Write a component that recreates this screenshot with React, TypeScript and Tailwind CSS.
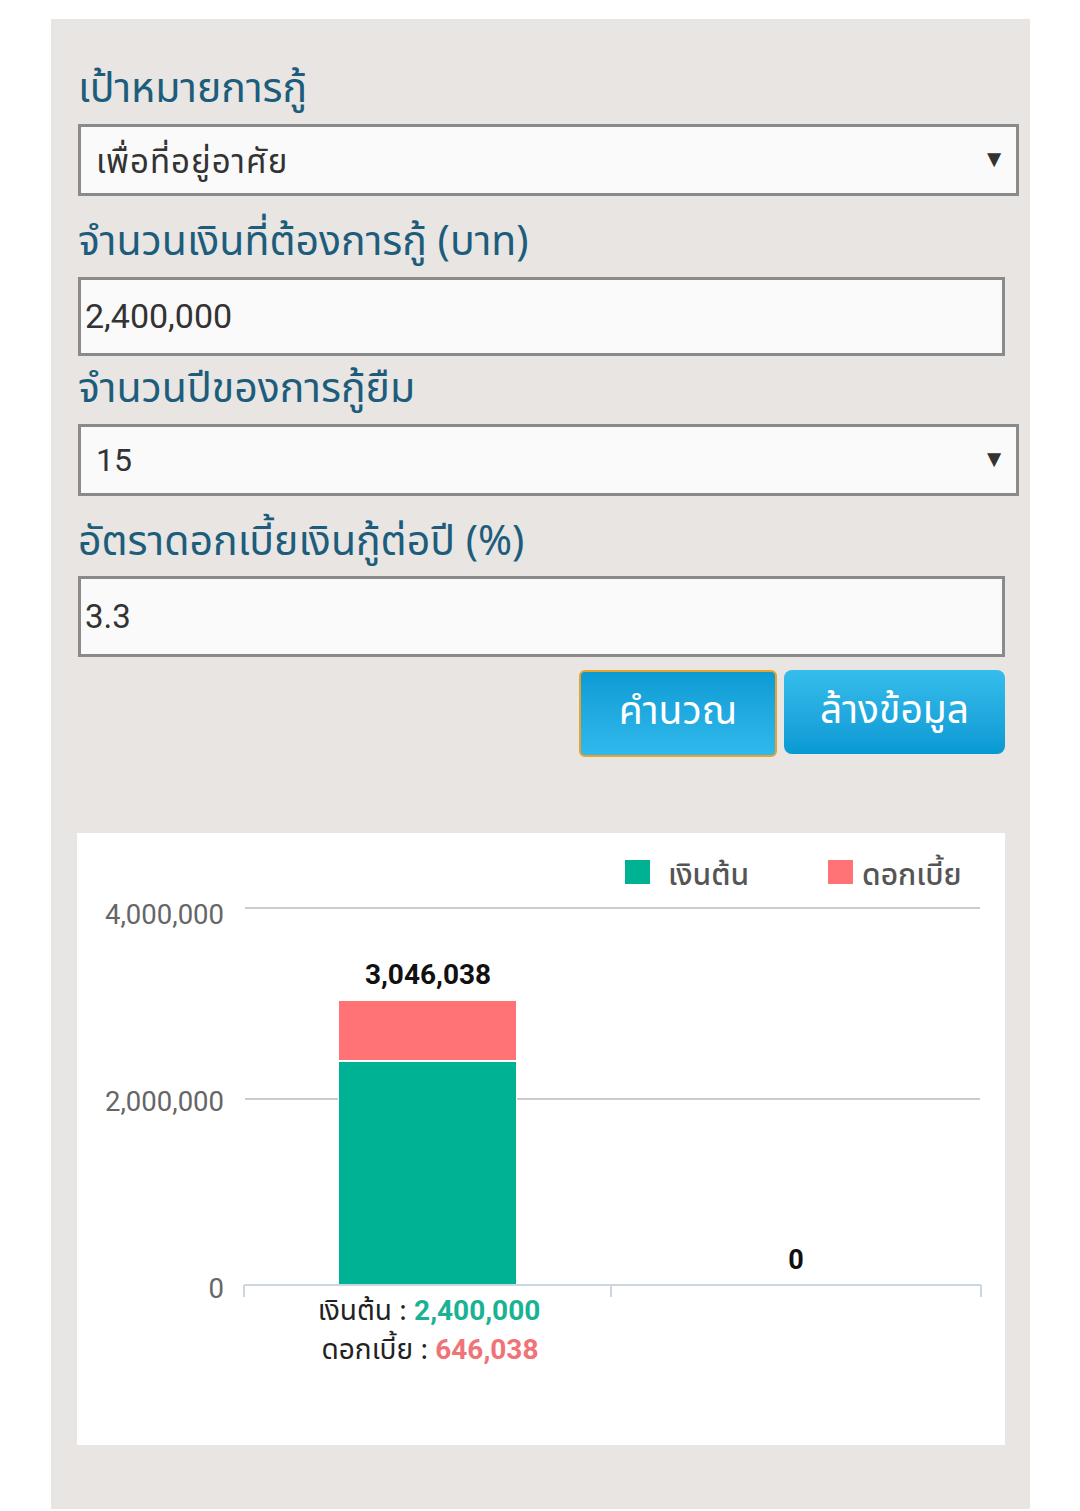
import React from 'react';

const thai = '"Noto Sans Thai", "Noto Sans", Roboto, sans-serif';

const Label: React.FC<{ children: React.ReactNode; className?: string }> = ({ children, className }) => (
  <div className={`h-[56px] flex items-center text-[41px] text-[#1d5d7b] ${className ?? ''}`}>{children}</div>
);

const Chart: React.FC = () => (
  <svg width="928" height="612" viewBox="0 0 928 612" className="block" style={{ fontFamily: thai }}>
    <rect x="0" y="0" width="928" height="612" fill="#ffffff" />
    {/* legend */}
    <rect x="548" y="27" width="25" height="24" fill="#00b294" />
    <text x="591" y="52" fontSize="30" fill="#555" fontWeight="500">เงินต้น</text>
    <rect x="751" y="27" width="25" height="24" fill="#ff7276" />
    <text x="785" y="52" fontSize="30" fill="#555" fontWeight="500">ดอกเบี้ย</text>
    {/* grid */}
    <line x1="168" y1="75" x2="903" y2="75" stroke="#cccccc" strokeWidth="2" />
    <line x1="168" y1="266" x2="903" y2="266" stroke="#cccccc" strokeWidth="2" />
    <text x="147" y="91" fontSize="27.5" fill="#666" textAnchor="end" fontFamily="Roboto, sans-serif">4,000,000</text>
    <text x="147" y="278" fontSize="27.5" fill="#666" textAnchor="end" fontFamily="Roboto, sans-serif">2,000,000</text>
    <text x="147" y="465" fontSize="27.5" fill="#666" textAnchor="end" fontFamily="Roboto, sans-serif">0</text>
    {/* bar */}
    <rect x="261" y="167" width="179" height="286" fill="#ffffff" />
    <rect x="262" y="168" width="177" height="59" fill="#ff7276" />
    <rect x="262" y="229" width="177" height="223" fill="#00b294" />
    <text x="351" y="151" fontSize="28" fontWeight="700" fill="#111" textAnchor="middle" fontFamily="Roboto, sans-serif">3,046,038</text>
    <text x="719" y="436" fontSize="27" fontWeight="700" fill="#111" textAnchor="middle" fontFamily="Roboto, sans-serif">0</text>
    {/* axis */}
    <line x1="167" y1="452" x2="904" y2="452" stroke="#ccd6e3" strokeWidth="2" />
    <line x1="167" y1="452" x2="167" y2="464" stroke="#ccd6e3" strokeWidth="2" />
    <line x1="534" y1="452" x2="534" y2="464" stroke="#ccd6e3" strokeWidth="2" />
    <line x1="904" y1="452" x2="904" y2="464" stroke="#ccd6e3" strokeWidth="2" />
    {/* x labels */}
    <text x="352" y="487" fontSize="28" fill="#222" textAnchor="middle">
      เงินต้น : <tspan fill="#19b394" fontWeight="700" fontFamily="Roboto, sans-serif">2,400,000</tspan>
    </text>
    <text x="353" y="526" fontSize="28" fill="#222" textAnchor="middle">
      ดอกเบี้ย : <tspan fill="#f07377" fontWeight="700" fontFamily="Roboto, sans-serif">646,038</tspan>
    </text>
  </svg>
);

const App: React.FC = () => {
  return (
    <div className="w-[1080px] min-h-[1511px] bg-white pt-[19px]" style={{ fontFamily: thai }}>
      <div className="ml-[51px] w-[979px] h-[1490px] bg-[#e8e5e3] pl-[27px] pt-[43px]">
        {/* เป้าหมายการกู้ */}
        <Label>เป้าหมายการกู้</Label>
        <div className="mt-[6px] w-[941px] h-[72px] border-[3px] border-[#8a8a8a] bg-[#fafafa] flex items-center justify-between pl-[15px] pr-[10px]">
          <span className="text-[33px] tracking-[1px] text-[#333] pt-[8px]">เพื่อที่อยู่อาศัย</span>
          <span className="text-[24px] text-[#333]">▼</span>
        </div>

        {/* จำนวนเงิน */}
        <Label className="mt-[19px]">จำนวนเงินที่ต้องการกู้ (บาท)</Label>
        <div className="mt-[6px] w-[927px] h-[79px] border-[3px] border-[#8a8a8a] bg-[#fafafa] flex items-center pl-[4px]">
          <span className="text-[34px] text-[#333] font-['Roboto']">2,400,000</span>
        </div>

        {/* จำนวนปี */}
        <Label className="mt-[6px]">จำนวนปีของการกู้ยืม</Label>
        <div className="mt-[6px] w-[941px] h-[72px] border-[3px] border-[#8a8a8a] bg-[#fafafa] flex items-center justify-between pl-[15px] pr-[10px]">
          <span className="text-[32px] text-[#333] font-['Roboto']">15</span>
          <span className="text-[24px] text-[#333]">▼</span>
        </div>

        {/* อัตราดอกเบี้ย */}
        <Label className="mt-[19px]">อัตราดอกเบี้ยเงินกู้ต่อปี (%)</Label>
        <div className="mt-[5px] w-[927px] h-[81px] border-[3px] border-[#8a8a8a] bg-[#fafafa] flex items-center pl-[4px]">
          <span className="text-[33px] text-[#333] font-['Roboto']">3.3</span>
        </div>

        {/* buttons */}
        <div className="w-[927px] mt-[13px] flex justify-end gap-[7px]">
          <button className="w-[198px] h-[87px] rounded-[6px] border-2 border-[#e8a42a] bg-gradient-to-b from-[#0b9bd4] to-[#30b9ec] text-white text-[39px]">
            คำนวณ
          </button>
          <button className="w-[221px] h-[84px] rounded-[8px] bg-gradient-to-b from-[#35bdec] to-[#0799d3] text-white text-[39px]">
            ล้างข้อมูล
          </button>
        </div>

        {/* chart */}
        <div className="mt-[76px] -ml-[1px]">
          <Chart />
        </div>
      </div>
    </div>
  );
};

export default App;
